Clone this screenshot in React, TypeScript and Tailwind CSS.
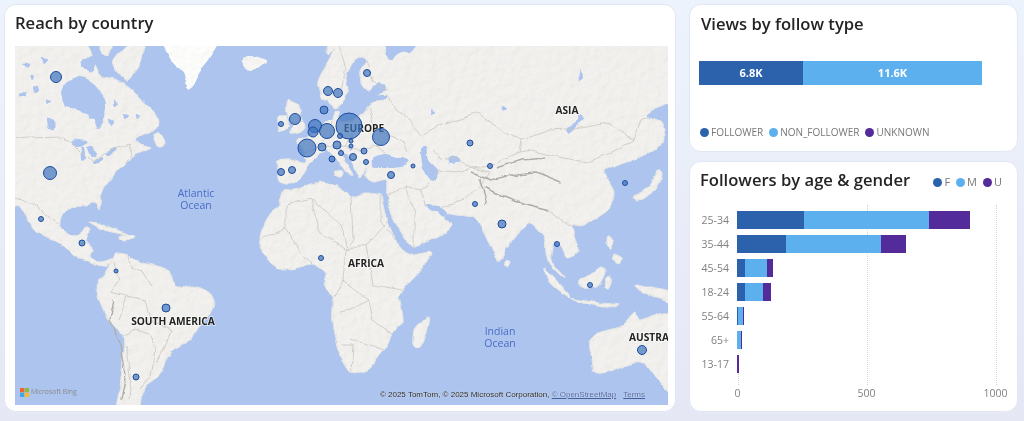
const sans = "font-['Open_Sans','Noto_Sans',sans-serif]";

const land = [
  "0,30 60,30 85,44 92,60 98,72 105,78 120,82 135,95 150,108 158,122 150,132 140,137 133,142 140,145 150,148 135,155 125,163 113,175 104,187 100,197 98,210 94,203 85,205 70,206 62,215 60,225 68,235 78,235 82,228 88,230 86,243 92,250 90,257 100,262 113,258 113,262 102,266 90,262 80,259 68,250 50,240 35,232 25,218 17,207 0,195",
  "113,257 115,253 127,255 143,263 167,270 173,285 197,288 212,298 207,317 197,327 190,340 173,350 165,360 157,377 143,388 137,420 115,420 120,380 122,360 123,337 107,320 95,290 103,275",
  "278,205 283,190 293,190 320,182 337,187 350,197 365,193 380,195 382,200 387,222 395,240 407,255 430,253 412,277 398,297 402,320 390,333 383,350 367,370 350,373 340,357 332,323 332,297 323,285 325,272 310,265 283,270 267,260 258,240 265,220",
  "277,167 279,161 290,160 304,163 304,152 296,142 307,137 318,131 326,122 332,120 333,112 337,110 338,120 350,120 362,115 368,105 383,100 385,95 368,92 360,85 358,70 366,60 360,56 352,62 345,78 347,90 342,100 333,108 328,100 320,97 317,82 325,65 333,50 338,30 680,30 680,93 653,110 645,117 660,123 663,143 640,157 623,163 603,173 613,193 607,210 583,225 570,227 577,250 567,258 560,246 553,243 550,260 563,277 556,272 546,258 544,240 540,233 527,223 507,247 497,260 483,233 473,218 455,215 447,214 444,220 451,226 440,235 413,247 400,232 390,212 386,196 385,180 372,182 365,175 365,165 360,178 354,168 347,155 338,148 345,163 352,175 345,172 335,158 325,150 318,155 308,165 304,172 297,180 290,184 280,183 277,178",
  "113,60 125,47 143,40 140,58 135,70 125,80 115,70",
  "287,100 296,104 299,116 304,126 300,132 288,134 292,124 286,113",
  "277,118 286,116 287,127 279,131",
  "88,222 104,225 127,235 112,232 98,228",
  "118,236 128,235 134,238 122,241",
  "412,343 414,328 427,317 425,332 418,347",
  "505,259 508,262 506,267 503,264",
  "542,268 555,280 570,297 562,294 548,282",
  "570,298 590,302 620,305 604,307 582,303",
  "577,280 590,274 600,267 604,272 597,286 583,288",
  "603,287 607,276 611,278 608,287",
  "607,237 612,240 610,250 606,245",
  "613,254 620,258 618,264 612,260",
  "635,285 650,288 680,295 680,306 655,297 642,292",
  "588,343 600,332 620,326 633,313 640,320 660,313 680,320 680,395 657,380 645,366 633,363 607,373 593,373 590,358",
  "632,198 640,192 650,184 657,170 660,176 654,188 642,198",
  "153,135 160,133 165,143 158,147",
  "335,170 342,172 340,177 334,175",
  "330,40 338,40 329,54 326,52",
  "100,40 112,40 108,56 100,54",
];

const water = [
  "60,97 64,84 77,77 90,82 103,100 104,118 97,130 92,118 83,113 72,108 63,105",
  "80,62 90,55 96,60 90,72 84,70",
  "373,156 385,153 395,157 407,160 400,167 385,168 373,167",
  "420,150 426,148 428,160 437,170 436,180 428,178 422,168",
  "448,158 456,156 458,162 449,164",
  "566,130 573,124 579,117 581,119 574,128 568,134",
  "368,95 372,88 380,82 384,88 378,94",
  "385,40 414,40 408,54 400,52 392,60 386,56",
  "425,202 440,208 447,213 443,218 435,212 428,208",
  "70,142 78,139 88,141 82,145 74,146",
  "80,147 83,147 84,160 80,161",
  "86,148 92,147 95,154 90,158",
  "90,163 100,157 102,159 93,165",
  "104,153 114,148 115,150 106,156",
  "46,118 52,120 52,130 48,128",
  "32,88 36,86 38,92 34,94",
  "20,92 26,93 24,97 19,96",
  "88,112 94,116 92,119 87,117",
  "122,114 127,116 124,120",
  "135,113 139,115 136,118",
  "22,62 28,63 26,67",
  "40,58 46,60 42,64",
  "30,74 35,75 32,79",
  "45,100 49,101 46,105",
  "108,120 113,122 110,126",
  "112,100 117,102 113,105",
  "500,105 504,108 500,110",
  "578,115 583,118 580,121",
  "578,70 582,78 578,80",
  "432,108 435,112 431,115",
  "350,148 352,150 349,151",
];

const borders = [
  "0,139 60,137 70,143 90,163 105,152 127,143 130,155 125,163",
  "14,198 35,205 45,215 60,225",
  "113,262 118,280 110,292 125,296 118,320",
  "127,255 130,268 142,272 150,285",
  "125,296 145,300 150,320 170,330 165,345 155,362",
  "122,337 132,330 148,335 155,350 150,375 138,388",
  "125,345 130,375 128,400",
  "258,240 285,228 285,205 310,198 340,226 345,250",
  "285,228 298,252 310,265",
  "310,198 318,232 345,250 365,245 387,222",
  "350,197 352,240 345,250",
  "380,195 380,222 395,240",
  "345,250 342,280 332,297",
  "365,245 372,285 402,290",
  "342,280 368,300 372,320 390,333",
  "350,340 370,345 383,350",
  "368,300 350,310 338,312",
  "350,373 352,345 342,345",
  "304,152 320,146 332,148 345,146 360,152 372,145 384,152",
  "332,120 330,135 322,140",
  "350,120 352,136 345,146",
  "368,105 372,122 380,132 400,140 407,152",
  "385,95 395,110 410,120 420,137",
  "420,137 440,125 477,113 500,130 520,140 518,152 500,160 490,166 470,168 455,158 440,160 432,150",
  "520,140 550,130 580,128 607,123 633,140 615,150 585,163 550,155 530,150 518,152",
  "633,140 640,120 645,117",
  "437,170 455,172 470,168 488,172 480,185 462,200 440,208",
  "386,196 405,186 420,190 437,170",
  "420,190 425,206",
  "405,186 413,215 413,247",
  "483,187 513,200 547,210 570,227",
  "338,46 345,70 340,90",
  "366,60 372,80 385,90",
];

const ridges = [
  "470,172 490,180 510,175 535,172 560,182",
  "483,187 498,194 513,200 530,205 547,210",
  "478,178 482,190 486,204",
  "495,168 520,160 545,158",
  "112,300 108,320 120,345 125,375 120,400",
];

const bubbles = [
  [55, 77, 5.5], [49, 173, 6.5], [40, 219, 2.5], [81, 243, 3], [115, 271, 2], [165, 308, 4], [135, 377, 3],
  [327, 91, 4.5], [337, 93, 4.5], [323, 110, 4], [294, 119, 5.5], [280, 124, 2.5], [314, 126, 6.5], [312, 132, 5],
  [326, 131, 7.5], [348, 126, 13], [339, 136, 2.5], [350, 141, 2], [350, 146, 2], [306, 148, 9], [321, 147, 4],
  [336, 145, 4], [340, 153, 2.5], [331, 159, 3], [363, 151, 3], [352, 157, 3.5], [365, 162, 2.5], [380, 137, 8.5],
  [390, 175, 3.5], [280, 172, 3.5], [291, 170, 3.5], [366, 73, 3.5], [469, 143, 3], [412, 166, 2], [489, 166, 2.5],
  [474, 204, 2.5], [624, 183, 2.5], [501, 224, 4], [556, 244, 2.5], [589, 285, 2.5], [641, 350, 4.5], [320, 258, 2.5],
];

const regions = [
  { name: "EUROPE", x: 363, y: 132, anchor: "middle" },
  { name: "ASIA", x: 566, y: 114, anchor: "middle" },
  { name: "AFRICA", x: 365, y: 267, anchor: "middle" },
  { name: "SOUTH AMERICA", x: 172, y: 325, anchor: "middle" },
  { name: "AUSTRA", x: 628, y: 341, anchor: "start" },
];

// closed catmull-rom curve through the points, so coasts don't look like polygons
function smooth(points: string) {
  const p = points.split(" ").map((s) => s.split(",").map(Number));
  const n = p.length;
  let d = `M${p[0][0]} ${p[0][1]}`;
  for (let i = 0; i < n; i++) {
    const a = p[(i - 1 + n) % n];
    const b = p[i];
    const c = p[(i + 1) % n];
    const e = p[(i + 2) % n];
    d += `C${b[0] + (c[0] - a[0]) / 8} ${b[1] + (c[1] - a[1]) / 8} ${c[0] - (e[0] - b[0]) / 8} ${c[1] - (e[1] - b[1]) / 8} ${c[0]} ${c[1]}`;
  }
  return d + "Z";
}

function WorldMap() {
  return (
    <div className="relative h-[359px] w-[653px] overflow-hidden bg-[#adc5ee]">
      <svg viewBox="14 46 653 359" className="block h-full w-full blur-[0.4px]">
        <defs>
          <filter id="coast" filterUnits="userSpaceOnUse" x="-20" y="20" width="720" height="420">
            <feTurbulence type="fractalNoise" baseFrequency="0.06" numOctaves="4" seed="4" result="n" />
            <feDisplacementMap in="SourceGraphic" in2="n" scale="6" xChannelSelector="R" yChannelSelector="G" />
          </filter>
          <filter id="relief" filterUnits="userSpaceOnUse" x="-20" y="20" width="720" height="420">
            <feTurbulence type="fractalNoise" baseFrequency="0.06" numOctaves="4" seed="4" result="n" />
            <feDisplacementMap in="SourceGraphic" in2="n" scale="6" xChannelSelector="R" yChannelSelector="G" result="d" />
            <feTurbulence type="fractalNoise" baseFrequency="0.12" numOctaves="3" seed="9" result="t" />
            <feDiffuseLighting in="t" surfaceScale="0.5" diffuseConstant="1.04" lightingColor="#ffffff" result="l">
              <feDistantLight azimuth="225" elevation="72" />
            </feDiffuseLighting>
            <feComposite in="l" in2="d" operator="in" result="lm" />
            <feBlend in="d" in2="lm" mode="multiply" />
          </filter>
        </defs>
        <g filter="url(#relief)">
          <path d={smooth("160,30 220,30 208,58 197,72 192,85 187,87 182,72 172,62")} fill="#fdfdfc" />
          <path d={smooth("240,57 252,55 265,60 258,68 248,72 243,66")} fill="#f6f5f3" />
          {land.map((p, i) => (
            <path key={i} d={smooth(p)} fill="#f2f1ee" stroke="#dcdad4" strokeWidth="0.6" />
          ))}
        </g>
        <g filter="url(#coast)">
          {water.map((p, i) => (
            <path key={i} d={smooth(p)} fill="#adc5ee" />
          ))}
          {borders.map((p, i) => (
            <polyline key={i} points={p} fill="none" stroke="#c9c7c0" strokeWidth="0.8" strokeLinejoin="round" />
          ))}
          {ridges.map((p, i) => (
            <polyline key={i} points={p} fill="none" stroke="#b0aea8" strokeWidth="1.4" strokeLinejoin="round" />
          ))}
        </g>
      </svg>
      <svg viewBox="14 46 653 359" className="absolute inset-0 h-full w-full">
        <text x="195" y="197" textAnchor="middle" fontSize="10.5" fill="#4a6cc6" fontFamily="Open Sans">Atlantic</text>
        <text x="195" y="209" textAnchor="middle" fontSize="10.5" fill="#4a6cc6" fontFamily="Open Sans">Ocean</text>
        <text x="499" y="335" textAnchor="middle" fontSize="10.5" fill="#4a6cc6" fontFamily="Open Sans">Indian</text>
        <text x="499" y="347" textAnchor="middle" fontSize="10.5" fill="#4a6cc6" fontFamily="Open Sans">Ocean</text>
        {regions.map((r) => (
          <text
            key={r.name}
            x={r.x}
            y={r.y}
            textAnchor={r.anchor as "middle" | "start"}
            fontSize="10.2"
            fontWeight="700"
            fill="#232323"
            stroke="#ffffff"
            strokeOpacity="0.6"
            strokeWidth="1.5"
            paintOrder="stroke"
            fontFamily="Open Sans"
          >
            {r.name}
          </text>
        ))}
        {bubbles.map(([x, y, r], i) => (
          <circle key={i} cx={x} cy={y} r={r} fill="#3f74bd" fillOpacity="0.7" stroke="#1d4d9e" strokeWidth="1" />
        ))}
      </svg>
      <div className="absolute bottom-[8px] left-[5px] flex items-center gap-[2px]">
        <svg width="9" height="9" viewBox="0 0 9 9">
          <rect width="4.3" height="4.3" fill="#f0623e" />
          <rect x="4.7" width="4.3" height="4.3" fill="#8cbb3c" />
          <rect y="4.7" width="4.3" height="4.3" fill="#3fa6e8" />
          <rect x="4.7" y="4.7" width="4.3" height="4.3" fill="#f8bb2c" />
        </svg>
        <span className="font-['Open_Sans',sans-serif] text-[6.8px] leading-none text-[#8a8a8a]">Microsoft Bing</span>
      </div>
      <div className="absolute right-[23px] bottom-[5px] flex gap-[7px] font-['Liberation_Sans',sans-serif] text-[8px] leading-[11px] whitespace-nowrap text-[#222] [text-shadow:0_0_1px_#ffffff]">
        <span>
          © 2025 TomTom, © 2025 Microsoft Corporation, <span className="text-[#4a5f9a] underline">© OpenStreetMap</span>
        </span>
        <span className="text-[#4a5f9a] underline">Terms</span>
      </div>
    </div>
  );
}

function LegendItem({ color, label }: { color: string; label: string }) {
  return (
    <div className="flex items-center gap-[2px]">
      <span className={`h-[9px] w-[9px] rounded-full ${color}`} />
      <span>{label}</span>
    </div>
  );
}

// widths in pixels: 1000 on the axis is 258px
const ageRows = [
  { age: "25-34", f: 67, m: 125, u: 41 },
  { age: "35-44", f: 48.5, m: 95, u: 25 },
  { age: "45-54", f: 8, m: 22, u: 5.5 },
  { age: "18-24", f: 8, m: 18, u: 8 },
  { age: "55-64", f: 1, m: 4.5, u: 1.5 },
  { age: "65+", f: 0, m: 4, u: 1 },
  { age: "13-17", f: 0, m: 0, u: 1.5 },
];

export default function App() {
  return (
    <div className={`flex h-[421px] w-[1024px] overflow-hidden bg-gradient-to-b from-[#edf3fc] to-[#e6e7f5] p-[4px] blur-[0.3px] ${sans}`}>
      <div className="h-[408px] w-[672px] rounded-xl border border-[#e1e8f4] bg-white px-[10px]">
        <h2 className="h-[41px] pt-[5px] text-[16.6px] leading-[26px] font-semibold text-[#252423]">Reach by country</h2>
        <WorldMap />
      </div>

      <div className="ml-[13px] flex w-[329px] flex-col gap-[9px]">
        <div className="h-[148px] rounded-xl border border-[#e1e8f4] bg-white">
          <h2 className="pt-[6px] pl-[11px] text-[16.6px] leading-[26px] font-semibold text-[#252423]">Views by follow type</h2>
          <div className="mt-[24px] ml-[9px] flex h-[24px] w-[283px] text-[11px] leading-[24px] font-bold text-white">
            <div className="w-[104px] bg-[#2b62ab] text-center">6.8K</div>
            <div className="flex-1 bg-[#5cb0ee] text-center">11.6K</div>
          </div>
          <div className="mt-[39px] ml-[10px] flex gap-[6px] text-[10px] leading-[16px] text-[#777]">
            <LegendItem color="bg-[#2b62ab]" label="FOLLOWER" />
            <LegendItem color="bg-[#5cb0ee]" label="NON_FOLLOWER" />
            <LegendItem color="bg-[#532b9a]" label="UNKNOWN" />
          </div>
        </div>

        <div className="h-[251px] rounded-xl border border-[#e1e8f4] bg-white">
          <div className="flex items-center justify-between pt-[5px] pr-[15px] pl-[10px]">
            <h2 className="text-[16.6px] leading-[26px] font-semibold text-[#252423]">Followers by age &amp; gender</h2>
            <div className="flex gap-[6px] pt-[4px] text-[11px] leading-[16px] text-[#777]">
              <LegendItem color="bg-[#2b62ab]" label="F" />
              <LegendItem color="bg-[#5cb0ee]" label="M" />
              <LegendItem color="bg-[#532b9a]" label="U" />
            </div>
          </div>

          <div className="relative mt-[18px] flex flex-col gap-[6px]">
            <div className="absolute top-[-6px] bottom-[-12px] left-[176.5px] border-l border-dotted border-[#d5d5d5]" />
            <div className="absolute top-[-6px] bottom-[-12px] left-[305.5px] border-l border-dotted border-[#d5d5d5]" />
            <div className="absolute top-[100%] left-[47.5px] h-[12px] border-l border-dotted border-[#d5d5d5]" />
            {ageRows.map((r) => (
              <div key={r.age} className="relative flex h-[18px] items-center">
                <span className="w-[39px] pt-[2px] text-right text-[10.5px] text-[#808080]">{r.age}</span>
                <div className="ml-[8px] flex h-[18px]">
                  <div className="bg-[#2b62ab]" style={{ width: r.f }} />
                  <div className="bg-[#5cb0ee]" style={{ width: r.m }} />
                  <div className="bg-[#532b9a]" style={{ width: r.u }} />
                </div>
              </div>
            ))}
          </div>
          <div className="relative mt-[12px] h-[16px] text-[10.5px] leading-[16px] text-[#808080]">
            <span className="absolute left-[47.5px] -translate-x-1/2">0</span>
            <span className="absolute left-[176.5px] -translate-x-1/2">500</span>
            <span className="absolute left-[305.5px] -translate-x-1/2">1000</span>
          </div>
        </div>
      </div>
    </div>
  );
}
